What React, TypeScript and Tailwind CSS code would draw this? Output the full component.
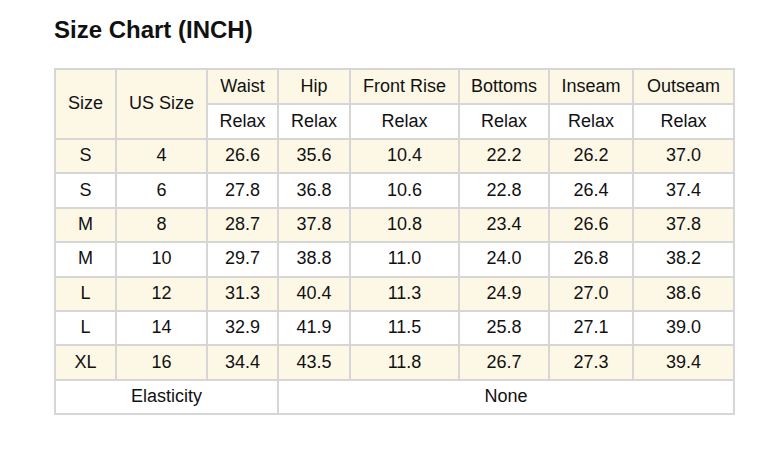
import React from "react";

const rows = [
  ["S", "4", "26.6", "35.6", "10.4", "22.2", "26.2", "37.0"],
  ["S", "6", "27.8", "36.8", "10.6", "22.8", "26.4", "37.4"],
  ["M", "8", "28.7", "37.8", "10.8", "23.4", "26.6", "37.8"],
  ["M", "10", "29.7", "38.8", "11.0", "24.0", "26.8", "38.2"],
  ["L", "12", "31.3", "40.4", "11.3", "24.9", "27.0", "38.6"],
  ["L", "14", "32.9", "41.9", "11.5", "25.8", "27.1", "39.0"],
  ["XL", "16", "34.4", "43.5", "11.8", "26.7", "27.3", "39.4"],
];

const cols = [61, 91, 71, 72, 109, 90, 84, 101];
const measures = ["Waist", "Hip", "Front Rise", "Bottoms", "Inseam", "Outseam"];

const cell = "border-2 border-[#d6d6d6] text-center align-middle px-0 pt-0 pb-[2px]";

export default function App() {
  return (
    <div
      className="w-[782px] h-[469px] bg-white text-[#111] pl-[54px] pt-[16px]"
      style={{ fontFamily: '"Liberation Sans", Arial, sans-serif' }}
    >
      <h1 className="text-[24px] font-bold leading-[28px] text-[#111]">Size Chart (INCH)</h1>
      <table className="mt-[24px] border-collapse table-fixed w-[679px] text-[18px] leading-[20px]">
        <colgroup>
          {cols.map((w, i) => (
            <col key={i} style={{ width: w }} />
          ))}
        </colgroup>
        <tbody>
          <tr className="h-[35px] bg-[#fdf8e6]">
            <td rowSpan={2} className={cell}>Size</td>
            <td rowSpan={2} className={cell}>US Size</td>
            {measures.map((m) => (
              <td key={m} className={cell}>{m}</td>
            ))}
          </tr>
          <tr className="h-[35px]">
            {measures.map((m) => (
              <td key={m} className={cell + " bg-white"}>Relax</td>
            ))}
          </tr>
          {rows.map((r, i) => (
            <tr key={i} className={"h-[34.4px] " + (i % 2 === 0 ? "bg-[#fdf8e6]" : "bg-white")}>
              {r.map((v, j) => (
                <td key={j} className={cell}>{v}</td>
              ))}
            </tr>
          ))}
          <tr className="h-[34.4px] bg-white">
            <td colSpan={3} className={cell}>Elasticity</td>
            <td colSpan={5} className={cell}>None</td>
          </tr>
        </tbody>
      </table>
    </div>
  );
}
